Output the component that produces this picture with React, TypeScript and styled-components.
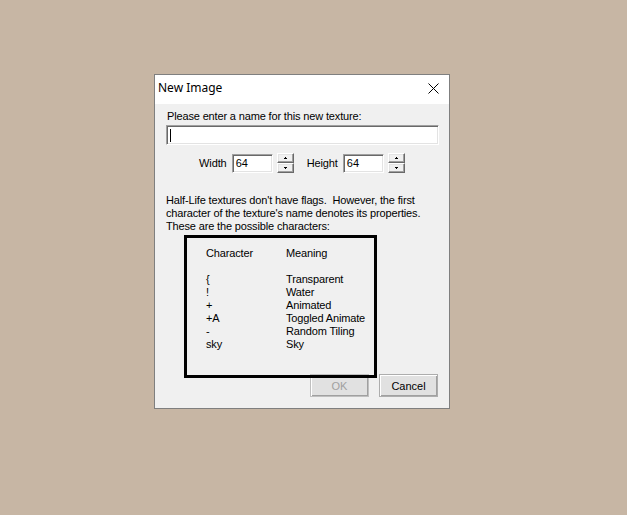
import React from "react";
import styled, { createGlobalStyle } from "styled-components";

const Global = createGlobalStyle`
  html, body { margin: 0; padding: 0; }
  body {
    background: #c7b6a4;
    width: 627px;
    height: 515px;
    overflow: hidden;
    font-family: "Liberation Sans", Arial, sans-serif;
  }
`;

const Desktop = styled.div`
  width: 627px;
  height: 515px;
  padding: 74px 0 0 154px;
  box-sizing: border-box;
`;

const Dialog = styled.div`
  position: relative;
  width: 296px;
  height: 335px;
  box-sizing: border-box;
  border: 1px solid #7f7f7f;
  background: #f0f0f0;
  display: flex;
  flex-direction: column;
`;

const TitleBar = styled.div`
  height: 29px;
  background: #ffffff;
  display: flex;
  align-items: center;
  justify-content: space-between;
  padding: 0 10px 0 3px;
`;

const Title = styled.span`
  font-family: "Noto Sans", "Open Sans", sans-serif;
  font-size: 12px;
  color: #000;
  margin-top: -4px;
`;

const CloseIcon = styled.svg`
  width: 11px;
  height: 11px;
  margin-top: -3px;
`;

const Body = styled.div`
  flex: 1;
  display: flex;
  flex-direction: column;
  padding: 6px 11px 11px 11px;
  font-size: 11px;
  color: #000;
`;

const Label = styled.div`
  line-height: 13px;
  padding-left: 1px;
  letter-spacing: -0.15px;
`;

const sunken = `
  box-sizing: border-box;
  background: #ffffff;
  border-top: 1px solid #a0a0a0;
  border-left: 1px solid #a0a0a0;
  border-right: 1px solid #ffffff;
  border-bottom: 1px solid #ffffff;
  box-shadow: inset 1px 1px 0 #696969, inset -1px -1px 0 #e3e3e3;
`;

const NameField = styled.div`
  ${sunken}
  margin-top: 2px;
  width: 273px;
  height: 20px;
  padding: 3px 0 0 3px;
`;

const Caret = styled.div`
  width: 1px;
  height: 13px;
  background: #000;
`;

const SizeRow = styled.div`
  margin-top: 8px;
  display: flex;
  align-items: center;
  padding-left: 32px;
  height: 20px;
`;

const SizeLabel = styled.span<{ $gap: number }>`
  margin-left: ${(p) => p.$gap}px;
  margin-right: 5px;
  letter-spacing: -0.1px;
`;

const NumField = styled.div`
  ${sunken}
  width: 41px;
  height: 19px;
  padding: 2px 0 0 3px;
  line-height: 13px;
`;

const Spinner = styled.div`
  margin-left: 4px;
  width: 17px;
  height: 20px;
  display: flex;
  flex-direction: column;
`;

const SpinHalf = styled.div`
  flex: 1;
  box-sizing: border-box;
  background: #f0f0f0;
  border-top: 1px solid #ffffff;
  border-left: 1px solid #ffffff;
  border-right: 1px solid #696969;
  border-bottom: 1px solid #696969;
  box-shadow: inset -1px -1px 0 #a0a0a0, inset 1px 1px 0 #e3e3e3;
  display: flex;
  align-items: center;
  justify-content: center;
`;

const Arrow = styled.svg`
  width: 3px;
  height: 2px;
`;

const Info = styled.div`
  margin-top: 21px;
  line-height: 13px;
  white-space: pre;
  letter-spacing: -0.15px;
`;

const Spacer = styled.div`
  flex: 1;
`;

const ButtonRow = styled.div`
  display: flex;
  justify-content: flex-end;
  gap: 10px;
`;

const Button = styled.button<{ $disabled?: boolean }>`
  width: 59px;
  height: 23px;
  box-sizing: border-box;
  font-family: "Liberation Sans", Arial, sans-serif;
  font-size: 11px;
  padding: 0;
  background: #e1e1e1;
  border: 1px solid ${(p) => (p.$disabled ? "#bfbfbf" : "#adadad")};
  color: ${(p) => (p.$disabled ? "#a0a0a0" : "#000")};
  box-shadow: inset 1px 1px 0 #ffffff, inset -1px -1px 0 #a0a0a0;
`;

const Callout = styled.div`
  position: absolute;
  left: 29px;
  top: 160px;
  width: 193px;
  height: 143px;
  box-sizing: border-box;
  border: 3px solid #000;
  padding: 9px 0 0 19px;
  font-size: 11px;
  line-height: 13px;
  display: grid;
  grid-template-columns: 80px auto;
  grid-auto-rows: 13px;
  align-content: start;
  letter-spacing: -0.15px;
`;

const Cell = styled.div``;

const Blank = styled.div`
  grid-column: 1 / span 2;
`;

const rows: [string, string][] = [
  ["{", "Transparent"],
  ["!", "Water"],
  ["+", "Animated"],
  ["+A", "Toggled Animate"],
  ["-", "Random Tiling"],
  ["sky", "Sky"],
];

const SpinBox = () => (
  <Spinner>
    <SpinHalf>
      <Arrow viewBox="0 0 3 2">
        <path d="M1 0h1v1h1v1H0V1h1z" fill="#000" />
      </Arrow>
    </SpinHalf>
    <SpinHalf>
      <Arrow viewBox="0 0 3 2">
        <path d="M0 0h3v1H2v1H1V1H0z" fill="#000" />
      </Arrow>
    </SpinHalf>
  </Spinner>
);

export default function App() {
  return (
    <>
      <Global />
      <Desktop>
        <Dialog>
          <TitleBar>
            <Title>New Image</Title>
            <CloseIcon viewBox="0 0 11 11">
              <path d="M0.5 0.5L10.5 10.5M10.5 0.5L0.5 10.5" stroke="#000" strokeWidth="1" />
            </CloseIcon>
          </TitleBar>
          <Body>
            <Label>Please enter a name for this new texture:</Label>
            <NameField>
              <Caret />
            </NameField>
            <SizeRow>
              <SizeLabel $gap={1}>Width</SizeLabel>
              <NumField>64</NumField>
              <SpinBox />
              <SizeLabel $gap={13}>Height</SizeLabel>
              <NumField>64</NumField>
              <SpinBox />
            </SizeRow>
            <Info>
              {"Half-Life textures don't have flags.  However, the first\ncharacter of the texture's name denotes its properties.\nThese are the possible characters:"}
            </Info>
            <Spacer />
            <ButtonRow>
              <Button $disabled>OK</Button>
              <Button>Cancel</Button>
            </ButtonRow>
          </Body>
          <Callout>
            <Cell>Character</Cell>
            <Cell>Meaning</Cell>
            <Blank />
            {rows.map(([c, m]) => (
              <React.Fragment key={c}>
                <Cell>{c}</Cell>
                <Cell>{m}</Cell>
              </React.Fragment>
            ))}
          </Callout>
        </Dialog>
      </Desktop>
    </>
  );
}
